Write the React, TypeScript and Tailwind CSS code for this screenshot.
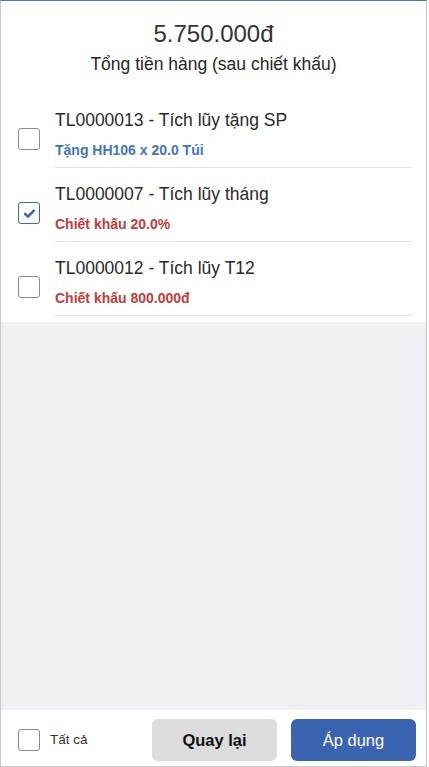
import { useState } from "react";

type Promo = {
  code: string;
  name: string;
  detail: string;
  tone: "blue" | "red";
};

const promos: Promo[] = [
  { code: "TL0000013", name: "Tích lũy tặng SP", detail: "Tặng HH106 x 20.0 Túi", tone: "blue" },
  { code: "TL0000007", name: "Tích lũy tháng", detail: "Chiết khấu 20.0%", tone: "red" },
  { code: "TL0000012", name: "Tích lũy T12", detail: "Chiết khấu 800.000đ", tone: "red" },
];

function Box({ checked, onClick }: { checked: boolean; onClick: () => void }) {
  return (
    <button
      onClick={onClick}
      className={`flex h-[22px] w-[22px] shrink-0 items-center justify-center rounded-[3px] border bg-white ${
        checked ? "border-[#3d67b1]" : "border-[#8c8c8c]"
      }`}
    >
      {checked && (
        <svg viewBox="0 0 24 24" className="h-[15px] w-[15px]" fill="none" stroke="#3d67b1" strokeWidth={4.2} strokeLinecap="round" strokeLinejoin="round">
          <path d="M5 12.5l4.5 4.5L19 7.5" />
        </svg>
      )}
    </button>
  );
}

export default function App() {
  const [picked, setPicked] = useState<boolean[]>([false, true, false]);
  const all = picked.every(Boolean);

  const toggle = (i: number) => setPicked((p) => p.map((v, j) => (j === i ? !v : v)));

  return (
    <div className="flex h-[767px] w-[429px] flex-col overflow-hidden bg-white font-['Liberation_Sans',Arial,sans-serif] text-[#262626]">
      <div className="flex h-full w-[427px] flex-col border-x border-b border-t border-[#c8c8c8] border-t-[#4a76c0]">
        {/* Header */}
        <div className="flex flex-col items-center pt-[18px]">
          <div className="text-[24px] leading-[30px] text-[#333]">5.750.000đ</div>
          <div className="mt-[4px] text-[17.5px] leading-[22px] text-[#262626]">Tổng tiền hàng (sau chiết khấu)</div>
        </div>

        {/* List */}
        <div className="pt-[19px] pb-[6px]">
          {promos.map((p, i) => (
            <div key={p.code} className="flex items-center pl-[17px] pr-[14px]">
              <div className="pt-[16px]">
                <Box checked={picked[i]} onClick={() => toggle(i)} />
              </div>
              <div className="ml-[15px] flex-1 border-b border-[#e2e2e2] pt-[15px] pb-[9px]">
                <div className="text-[17.5px] leading-[22px] text-[#2a2a2a]">
                  {p.code} - {p.name}
                </div>
                <div
                  className={`mt-[11px] text-[14px] font-bold leading-[16px] ${
                    p.tone === "blue" ? "text-[#3f76bd]" : "text-[#c53b3b]"
                  }`}
                >
                  {p.detail}
                </div>
              </div>
            </div>
          ))}
        </div>

        {/* Empty area */}
        <div className="flex-1 bg-[#efeff4]" />

        {/* Footer */}
        <div className="flex h-[56px] items-center pt-[4px] pl-[17px] pr-[10px]">
          <div className="flex items-center gap-[10px]">
            <Box checked={all} onClick={() => setPicked(promos.map(() => !all))} />
            <span className="text-[13.5px] text-[#333]">Tất cả</span>
          </div>
          <div className="ml-auto flex gap-[14px]">
            <button className="h-[42px] w-[125px] rounded-[6px] bg-[#dcdcdd] text-[16.5px] font-bold text-[#111]">Quay lại</button>
            <button className="h-[42px] w-[125px] rounded-[6px] bg-[#3b64b0] text-[16.5px] text-white">Áp dụng</button>
          </div>
        </div>
      </div>
    </div>
  );
}
